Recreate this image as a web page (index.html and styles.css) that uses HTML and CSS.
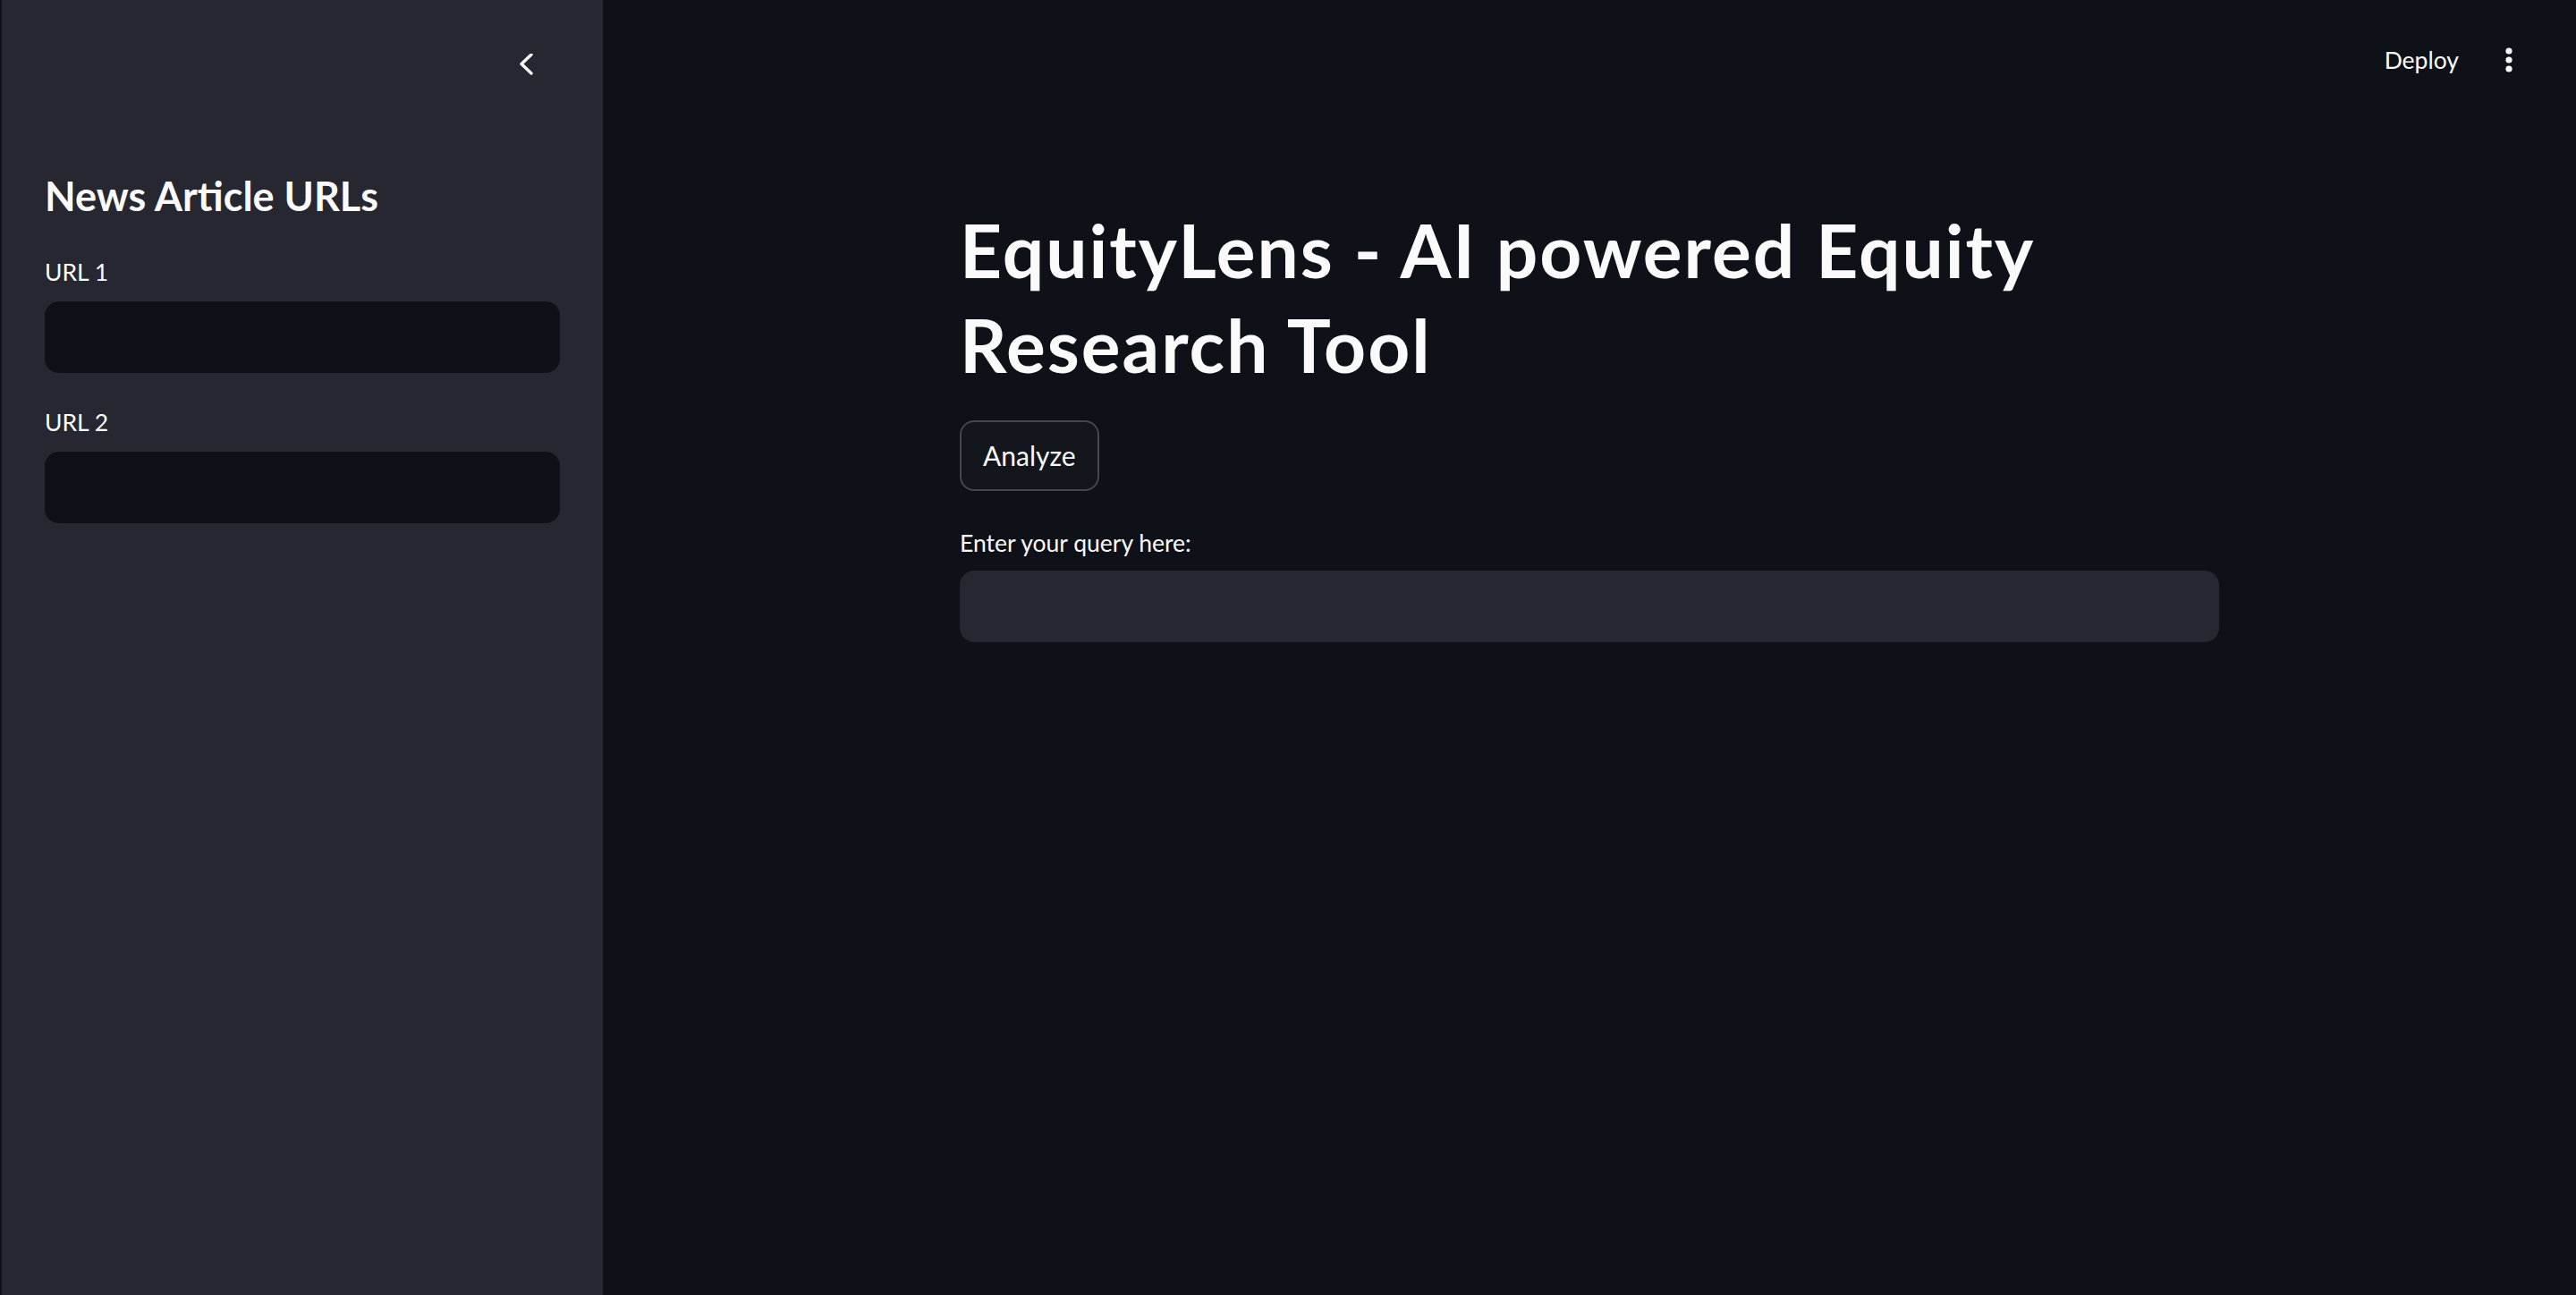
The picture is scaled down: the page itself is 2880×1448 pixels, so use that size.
FILE: index.html
```html
<!DOCTYPE html>
<html lang="en">
<head>
<meta charset="utf-8">
<title>EquityLens</title>
<link rel="stylesheet" href="styles.css">
</head>
<body>
<div class="app">
  <aside class="sidebar">
    <div class="sidebar-top">
      <button class="collapse" aria-label="Collapse sidebar">
        <svg width="24" height="24" viewBox="0 0 24 24"><polyline points="17,1 6,11.5 17,22" fill="none" stroke="#fafafa" stroke-width="3.4" stroke-linecap="round" stroke-linejoin="round"/></svg>
      </button>
    </div>
    <h2 class="side-title">News Article URLs</h2>
    <label class="label side-label first">URL 1</label>
    <div class="input dark"></div>
    <label class="label side-label">URL 2</label>
    <div class="input dark"></div>
  </aside>
  <main class="main">
    <header class="topbar">
      <span class="deploy">Deploy</span>
      <svg class="menu" width="8" height="28" viewBox="0 0 8 28"><circle cx="4" cy="4" r="3.6" fill="#fafafa"/><circle cx="4" cy="14" r="3.6" fill="#fafafa"/><circle cx="4" cy="24" r="3.6" fill="#fafafa"/></svg>
    </header>
    <section class="content">
      <h1 class="title">EquityLens - AI powered Equity Research Tool</h1>
      <button class="btn">Analyze</button>
      <label class="label query-label">Enter your query here:</label>
      <div class="input light"></div>
    </section>
  </main>
</div>
</body>
</html>
```
FILE: styles.css
```css
html, body {
  margin: 0;
  padding: 0;
  background: #0e1117;
  color: #fafafa;
  font-family: Lato, "Noto Sans", sans-serif;
}
.app {
  display: flex;
  height: 1448px;
  overflow: hidden;
}
.sidebar {
  width: 576px;
  flex: none;
  border-left: 2px solid #0e1117;
  background: #262730;
  padding: 0 48px;
  display: flex;
  flex-direction: column;
}
.sidebar-top {
  display: flex;
  justify-content: flex-end;
  padding-top: 60px;
  padding-right: 25px;
  height: 24px;
}
.collapse {
  background: none;
  border: 0;
  padding: 0;
  width: 24px;
  height: 24px;
  display: block;
}
.collapse svg { display: block; }
.side-title {
  margin: 104.6px 0 0;
  font-size: 45px;
  line-height: 60px;
  font-weight: 700;
}
.label {
  display: block;
  font-size: 26.5px;
  line-height: 36px;
  font-weight: 400;
}
.side-label { margin-top: 36.7px; }
.side-label.first { margin-top: 37px; }
.input {
  height: 80px;
  border-radius: 16px;
  margin-top: 15.3px;
}
.input.dark { background: #0e1117; }
.input.light { background: #262730; margin-top: 13.3px; }
.main {
  flex: 1;
  display: flex;
  flex-direction: column;
}
.topbar {
  height: 71px;
  padding: 49px 71px 0 0;
  display: flex;
  justify-content: flex-end;
  align-items: flex-start;
  gap: 52px;
}
.deploy {
  font-size: 26.5px;
  line-height: 36px;
}
.menu { display: block; margin-top: 4px; }
.content {
  width: 1408px;
  margin: 0 auto;
}
.title {
  margin: 106.3px 0 0;
  font-size: 82px;
  line-height: 106px;
  font-weight: 700;
  letter-spacing: 2px;
  width: 1320px;
}
.btn {
  display: block;
  margin-top: 31.7px;
  height: 79px;
  padding: 0 24px;
  border: 2px solid #45474e;
  border-radius: 16px;
  background: #13161d;
  color: #fafafa;
  font-family: Lato, "Noto Sans", sans-serif;
  font-size: 30px;
}
.query-label { margin-top: 39.7px; }
```
